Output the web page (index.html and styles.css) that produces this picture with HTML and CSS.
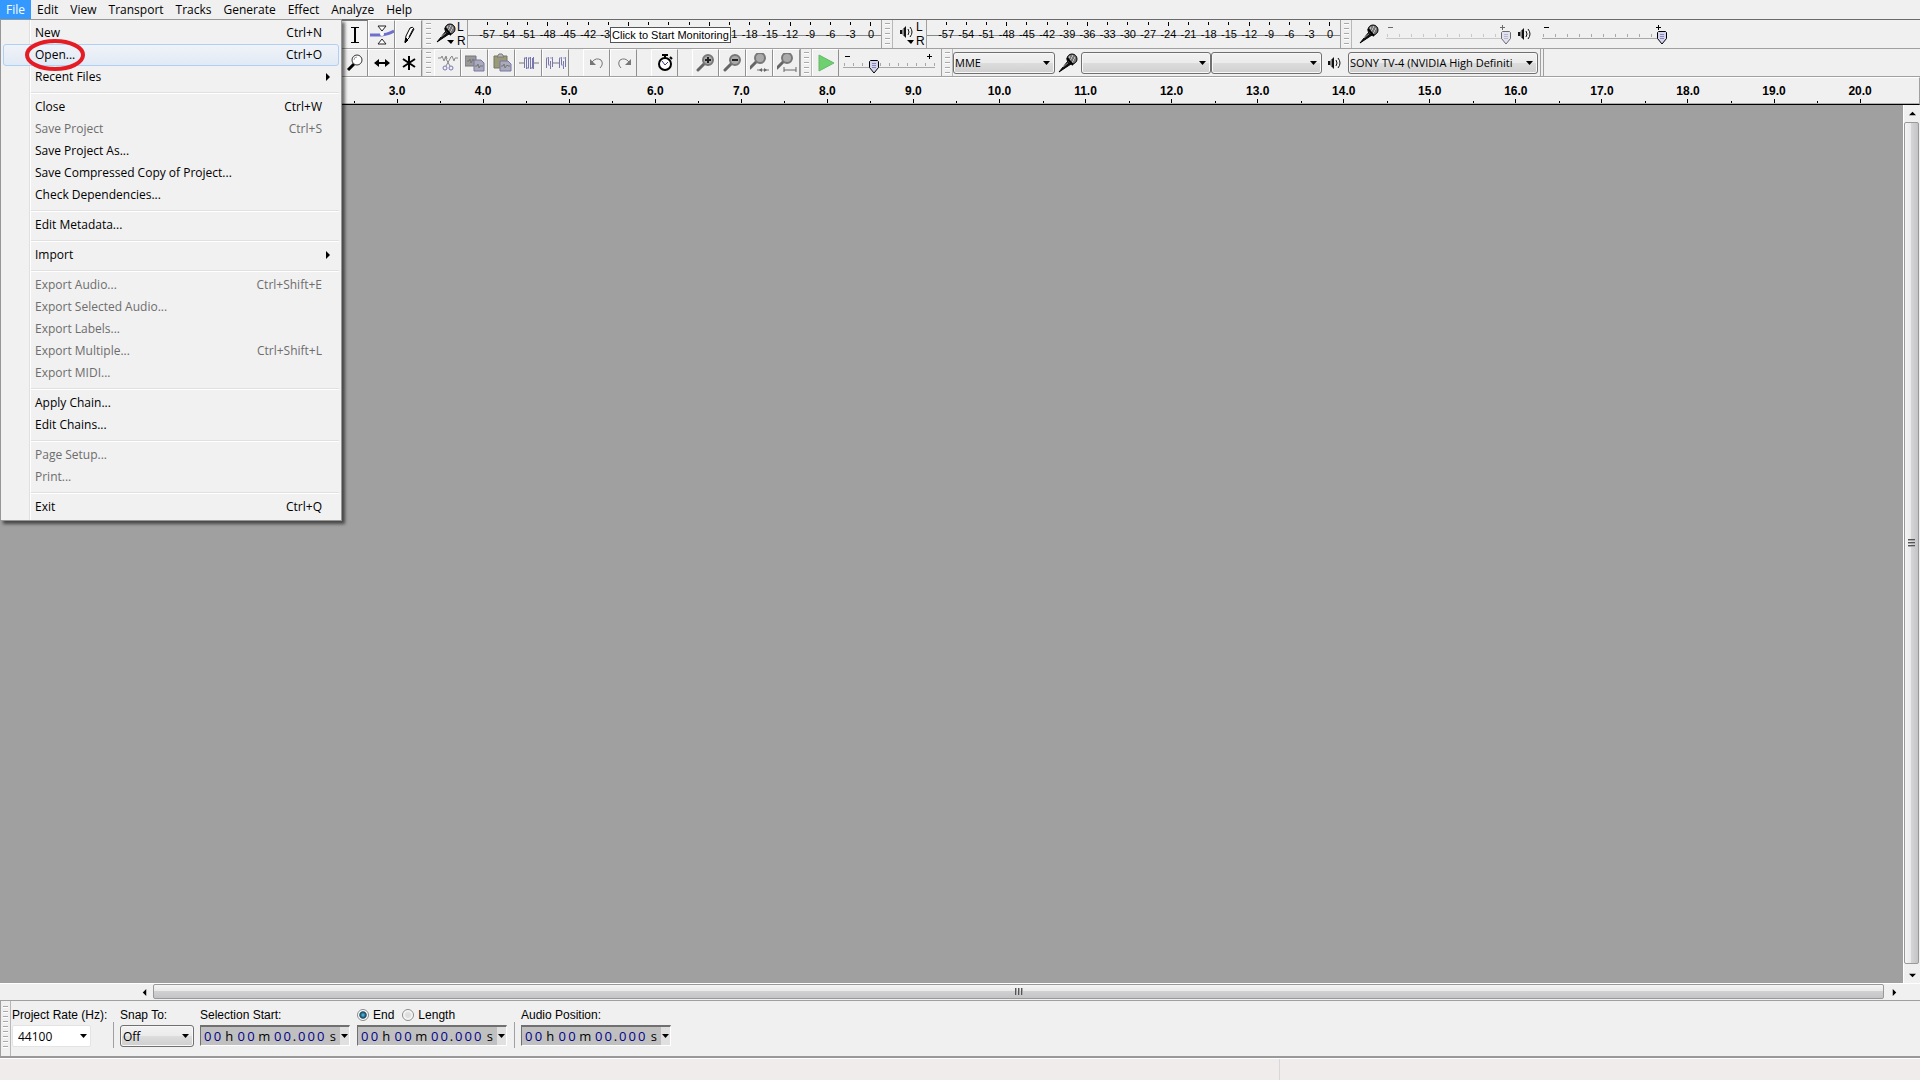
FILE: index.html
```html
<!DOCTYPE html>
<html lang="en">
<head>
    <meta charset="utf-8">
    <title>Audacity</title>
    <link rel="stylesheet" href="styles.css">
</head>
<body>
    <!-- Shared icons -->
    <svg class="defs" aria-hidden="true">
        <symbol id="mic" viewBox="0 0 20 20">
            <path d="M1 19L10 8L13 11Z" fill="#111" stroke="#000"/>
            <path d="M5 14L11 9" stroke="#999"/>
            <circle cx="14" cy="6" r="5" fill="#777" stroke="#000"/>
            <path d="M11 4h1M14 3h1M13 5h1M16 5h1M12 7h1M15 7h1M14 9h1" stroke="#fff"/>
            <path d="M9 5L15 12" stroke="#000" stroke-width="2"/>
        </symbol>
        <symbol id="speaker" viewBox="0 0 14 12">
            <path d="M0 4h2L6 0v12L2 8H0z" fill="#111"/>
            <path d="M3 3v6" stroke="#fff"/>
            <path d="M8 3q2 3 0 6M10 1q4 5 0 10" fill="none" stroke="#111"/>
        </symbol>
        <symbol id="lens" viewBox="0 0 20 20">
            <path d="M2 17L9 10" stroke="#666" stroke-width="3" stroke-linecap="round"/>
            <circle cx="12" cy="7" r="5" fill="#aaa" stroke="#777" stroke-width="2"/>
        </symbol>
    </svg>

    <nav class="menubar">
        <button class="active">File</button>
        <button>Edit</button>
        <button>View</button>
        <button>Transport</button>
        <button>Tracks</button>
        <button>Generate</button>
        <button>Effect</button>
        <button>Analyze</button>
        <button>Help</button>

        <div class="menu">
            <button>New<span>Ctrl+N</span></button>
            <button class="hover">Open...<span>Ctrl+O</span>
                <svg class="ring" viewBox="0 0 62 34"><ellipse cx="31" cy="17" rx="28" ry="14" fill="none" stroke="#e61c24" stroke-width="4"/></svg>
            </button>
            <button class="sub">Recent Files</button>
            <hr>
            <button>Close<span>Ctrl+W</span></button>
            <button disabled>Save Project<span>Ctrl+S</span></button>
            <button>Save Project As...</button>
            <button>Save Compressed Copy of Project...</button>
            <button>Check Dependencies...</button>
            <hr>
            <button>Edit Metadata...</button>
            <hr>
            <button class="sub">Import</button>
            <hr>
            <button disabled>Export Audio...<span>Ctrl+Shift+E</span></button>
            <button disabled>Export Selected Audio...</button>
            <button disabled>Export Labels...</button>
            <button disabled>Export Multiple...<span>Ctrl+Shift+L</span></button>
            <button disabled>Export MIDI...</button>
            <hr>
            <button>Apply Chain...</button>
            <button>Edit Chains...</button>
            <hr>
            <button disabled>Page Setup...</button>
            <button disabled>Print...</button>
            <hr>
            <button>Exit<span>Ctrl+Q</span></button>
        </div>
    </nav>

    <div class="toolbar">
        <button class="tool pressed" aria-label="Selection Tool">
            <svg viewBox="0 0 20 20"><path d="M6 2.5h8M6 17.5h8" stroke="#000"/><path d="M10 2v16" stroke="#000" stroke-width="2"/></svg>
        </button>
        <button class="tool wide" aria-label="Envelope Tool">
            <svg viewBox="0 0 24 22"><path d="M0 11h10q6 0 14-4" fill="none" stroke="#6f70cc" stroke-width="3"/><path d="M8 2h8l-4 5zM8 20h8l-4-5z" fill="#fff" stroke="#222"/><circle cx="12" cy="10" r="2" fill="#fff"/></svg>
        </button>
        <button class="tool" aria-label="Draw Tool">
            <svg viewBox="0 0 20 20"><path d="M6 17l1-6 4-8q3-2 4 1l-5 9z" fill="#fff" stroke="#000"/><path d="M6 18l1-5 2 2zM10 12l4-8" fill="#000" stroke="#000"/></svg>
        </button>
        <div class="grip"></div>
        <div class="meter-group">
            <button class="meter-icon" aria-label="Record Meter">
                <svg viewBox="0 0 22 24"><use href="#mic" x="2" y="1" width="20" height="20"/><path d="M13 18h7l-3 4z"/></svg>
            </button>
            <div class="lr"><span>L</span><span>R</span></div>
            <div class="meter">
                <span>-57</span><span>-54</span><span>-51</span><span>-48</span><span>-45</span><span>-42</span><span>-39</span><span></span><span></span><span></span><span></span><span></span><span>-21</span><span>-18</span><span>-15</span><span>-12</span><span>-9</span><span>-6</span><span>-3</span><span>0</span>
                <div class="tooltip">Click to Start Monitoring</div>
            </div>
        </div>
        <div class="grip boxed"></div>
        <div class="meter-group">
            <button class="meter-icon" aria-label="Playback Meter">
                <svg viewBox="0 0 22 24"><use href="#speaker" x="7" y="4" width="14" height="12"/><path d="M14 18h7l-3 4z"/></svg>
            </button>
            <div class="lr"><span>L</span><span>R</span></div>
            <div class="meter">
                <span>-57</span><span>-54</span><span>-51</span><span>-48</span><span>-45</span><span>-42</span><span>-39</span><span>-36</span><span>-33</span><span>-30</span><span>-27</span><span>-24</span><span>-21</span><span>-18</span><span>-15</span><span>-12</span><span>-9</span><span>-6</span><span>-3</span><span>0</span>
            </div>
        </div>
        <div class="grip boxed"></div>
        <div class="mixer">
            <svg class="mic"><use href="#mic"/></svg>
            <label class="slider off"><input type="range" min="0" max="1" step="0.01" value="1" aria-label="Recording Volume" disabled></label>
            <svg class="speaker"><use href="#speaker"/></svg>
            <label class="slider"><input type="range" min="0" max="1" step="0.01" value="1" aria-label="Playback Volume"></label>
        </div>
    </div>

    <div class="toolbar second">
        <button class="tool" aria-label="Zoom Tool">
            <svg viewBox="0 0 20 20"><path d="M3 17L9 11" stroke="#000" stroke-width="3"/><circle cx="12" cy="7" r="5" fill="#fff" stroke="#333"/><path d="M9 7q0-3 3-3" fill="none" stroke="#999"/></svg>
        </button>
        <button class="tool" aria-label="Time Shift Tool">
            <svg viewBox="0 0 20 20"><path d="M3 10h14" stroke="#000" stroke-width="2"/><path d="M2 10l5-4v8zM18 10l-5-4v8z"/></svg>
        </button>
        <button class="tool" aria-label="Multi-Tool">
            <svg viewBox="0 0 20 20"><path d="M10 3v14M4 6l12 8M16 6L4 14" stroke="#000" stroke-width="2"/></svg>
        </button>
        <div class="grip"></div>
        <div class="tools">
            <button class="tool" aria-label="Cut">
                <svg viewBox="0 0 20 20"><path d="M0 5h3l1-2 2 5 2-5 1 3M12 5l2-2 2 5 1-3h3" fill="none" stroke="#888"/><path d="M7 4l5 9M13 4l-5 9" stroke="#888"/><circle cx="7" cy="15" r="2" fill="none" stroke="#7777b5"/><circle cx="13" cy="15" r="2" fill="none" stroke="#7777b5"/></svg>
            </button>
            <button class="tool" aria-label="Copy">
                <svg viewBox="0 0 20 20"><path d="M0 3h11v10H0z" fill="#999" stroke="#777"/><path d="M9 7h7l3 3v8H9z" fill="#aab" stroke="#7777a5"/><path d="M2 8h2l1-2 1 4 2-4 1 2M10 13h2l1-2 1 4 1-2h3" fill="none" stroke="#777"/></svg>
            </button>
            <button class="tool" aria-label="Paste">
                <svg viewBox="0 0 20 20"><path d="M2 3h13v12H2z" fill="#9a9a78" stroke="#777760"/><path d="M5 4l2-3h3l2 3z" fill="#bbb" stroke="#777"/><path d="M8 8h8l3 3v7H8z" fill="#aab" stroke="#7777a5"/><path d="M9 13h2l1-2 1 4 2-3 1 1h2" fill="none" stroke="#777"/></svg>
            </button>
            <button class="tool" aria-label="Trim">
                <svg viewBox="0 0 20 20"><path d="M0 10h5M15 10h5" stroke="#777"/><path d="M5.500 5v10M7.500 4v12M9.500 5v10M11.500 4v12M13.500 5v10M14.500 4v12" fill="none" stroke="#7777b0"/><path d="M5 5h2M7 15h3M9 5h3M11 15h3" stroke="#7777b0"/></svg>
            </button>
            <button class="tool" aria-label="Silence">
                <svg viewBox="0 0 20 20"><path d="M6 10h8" stroke="#777"/><path d="M.500 5v10M2.500 4v8M4.500 8v8M6.500 4v10M13.500 5v10M15.500 4v8M17.500 8v8M19.500 4v10" stroke="#7777b0"/><path d="M0 5h3M2 12h3M4 5h3M13 5h3M15 12h3M17 5h3" stroke="#9a9ac4"/></svg>
            </button>
        </div>
        <div class="tools">
            <button class="tool" aria-label="Undo">
                <svg viewBox="0 0 20 20"><path d="M5 9q4-5 9-2 3 4-1 8" fill="none" stroke="#777"/><path d="M3 6v6h6z" fill="#777"/></svg>
            </button>
            <button class="tool" aria-label="Redo">
                <svg viewBox="0 0 20 20"><path d="M15 9q-4-5-9-2-3 4 1 8" fill="none" stroke="#777"/><path d="M17 6v6h-6z" fill="#777"/></svg>
            </button>
        </div>
        <div class="tools">
            <button class="tool" aria-label="Sync-Lock Tracks">
                <svg viewBox="0 0 20 20"><path d="M7 2h6M10 1v4M15 4l2 2" stroke="#000" stroke-width="2"/><circle cx="10" cy="11" r="6" fill="#fff" stroke="#000" stroke-width="2"/><path d="M7 8l3 4 3-3" fill="none" stroke="#3838a0"/></svg>
            </button>
        </div>
        <div class="tools">
            <button class="tool" aria-label="Zoom In">
                <svg viewBox="0 0 20 20"><use href="#lens" width="20" height="20"/><path d="M9 7h6M12 4v6" stroke="#222" stroke-width="2"/></svg>
            </button>
            <button class="tool" aria-label="Zoom Out">
                <svg viewBox="0 0 20 20"><use href="#lens" width="20" height="20"/><path d="M9 7h6" stroke="#222" stroke-width="2"/></svg>
            </button>
            <button class="tool" aria-label="Fit Selection">
                <svg viewBox="0 0 20 20"><use href="#lens" x="-2" y="-2" width="20" height="20"/><path d="M7 17h12" stroke="#777"/><path d="M9 17l3-2v4zM17 17l-3-2v4z" fill="#666"/></svg>
            </button>
            <button class="tool" aria-label="Fit Project">
                <svg viewBox="0 0 20 20"><use href="#lens" x="-2" y="-2" width="20" height="20"/><path d="M7 17h12M7 14v5M19 14v5" stroke="#666"/></svg>
            </button>
        </div>
        <div class="grip boxed"></div>
        <button class="tool" aria-label="Play-at-Speed">
            <svg viewBox="0 0 20 20"><path d="M3 2v16l15-8z" fill="#6fd06f" stroke="#68b868"/></svg>
        </button>
        <label class="slider speed"><input type="range" min="0" max="1" step="0.01" value="0.3" aria-label="Playback Speed"></label>
        <div class="grip boxed"></div>
        <div class="devices">
            <select class="host" aria-label="Audio Host"><option>MME</option></select>
            <svg class="mic"><use href="#mic"/></svg>
            <select class="input-device" aria-label="Recording Device"><option></option></select>
            <select class="channels" aria-label="Recording Channels"><option></option></select>
            <svg class="speaker"><use href="#speaker"/></svg>
            <select class="output-device" aria-label="Playback Device"><option>SONY TV-4 (NVIDIA High Definiti</option></select>
        </div>
    </div>

    <div class="ruler">
        <span>3.0</span><span>4.0</span><span>5.0</span><span>6.0</span><span>7.0</span><span>8.0</span><span>9.0</span><span>10.0</span><span>11.0</span><span>12.0</span><span>13.0</span><span>14.0</span><span>15.0</span><span>16.0</span><span>17.0</span><span>18.0</span><span>19.0</span><span>20.0</span>
    </div>

    <main class="workspace">
        <div class="tracks"></div>
        <div class="scroll vertical">
            <button aria-label="Scroll up"><svg viewBox="0 0 8 8"><path d="M0 6h8L4 2z"/></svg></button>
            <div class="thumb"><i></i></div>
            <button aria-label="Scroll down"><svg viewBox="0 0 8 8"><path d="M0 2h8L4 6z"/></svg></button>
        </div>
    </main>
    <div class="scroll horizontal">
        <button aria-label="Scroll left"><svg viewBox="0 0 8 8"><path d="M6 0v8L2 4z"/></svg></button>
        <div class="thumb"><i></i></div>
        <button aria-label="Scroll right"><svg viewBox="0 0 8 8"><path d="M2 0v8l4-4z"/></svg></button>
    </div>

    <footer class="selection-bar">
        <div class="grip boxed"></div>
        <div class="field rate">
            <label for="rate">Project Rate (Hz):</label>
            <div class="combo">
                <input type="text" id="rate" value="44100">
                <button class="drop" aria-label="Choose rate"></button>
            </div>
        </div>
        <div class="field snap">
            <label for="snap">Snap To:</label>
            <select id="snap"><option>Off</option></select>
        </div>
        <div class="field">
            <div class="caption">Selection Start:</div>
            <div class="time"><b>0</b><b>0</b><em>h</em><b>0</b><b>0</b><em class="min">m</em><b>0</b><b>0</b><u>.</u><b>0</b><b>0</b><b>0</b><em>s</em><button class="drop" aria-label="Selection start format"></button></div>
        </div>
        <div class="field">
            <div class="caption">
                <label><input type="radio" name="end" checked>End</label>
                <label><input type="radio" name="end">Length</label>
            </div>
            <div class="time"><b>0</b><b>0</b><em>h</em><b>0</b><b>0</b><em class="min">m</em><b>0</b><b>0</b><u>.</u><b>0</b><b>0</b><b>0</b><em>s</em><button class="drop" aria-label="Selection end format"></button></div>
        </div>
        <div class="field position">
            <div class="caption">Audio Position:</div>
            <div class="time"><b>0</b><b>0</b><em>h</em><b>0</b><b>0</b><em class="min">m</em><b>0</b><b>0</b><u>.</u><b>0</b><b>0</b><b>0</b><em>s</em><button class="drop" aria-label="Audio position format"></button></div>
        </div>
    </footer>
    <div class="status"><div></div><div></div></div>
</body>
</html>
```
FILE: styles.css
```css
* {
    box-sizing: border-box;
}

body {
    margin: 0;
    height: 100vh;
    display: flex;
    flex-direction: column;
    overflow: hidden;
    background: #f0f0f0;
    color: #000;
    font: 12px "Liberation Sans", Arial, sans-serif;
}

button {
    margin: 0;
    padding: 0;
    border: 0;
    background: none;
    color: inherit;
    font: inherit;
}

.defs {
    display: none;
}

/* Menu bar */
.menubar {
    position: relative;
    z-index: 5;
    display: flex;
    flex: none;
    height: 20px;
    border-bottom: 1px solid #6b6b6b;
    font-family: "Open Sans", sans-serif;
}

.menubar > button {
    padding: 0 6px;
    line-height: 17px;
}

.menubar > .active {
    background: #3399ff;
    color: #fff;
}

.menu {
    position: absolute;
    top: 19px;
    left: 0;
    width: 342px;
    padding: 2px;
    border: 1px solid #979797;
    background: linear-gradient(to right, transparent 28px, #e0e0e0 28px, #e0e0e0 29px, #fff 29px, #fff 30px, transparent 30px) #f1f1f1;
    box-shadow: 3px 3px 3px rgba(0, 0, 0, 0.55);
}

.menu button {
    position: relative;
    display: flex;
    justify-content: space-between;
    width: 100%;
    height: 22px;
    padding: 0 16px 0 31px;
    border: 1px solid transparent;
    border-radius: 3px;
    line-height: 20px;
}

.menu button:disabled {
    color: #6d6d6d;
}

.menu .hover {
    border-color: #aecff7;
    background: linear-gradient(rgba(240, 244, 250, 0.8), rgba(221, 232, 246, 0.8));
}

.menu .sub::after {
    content: "";
    align-self: center;
    margin-right: -8px;
    border: 4px solid transparent;
    border-left-color: #000;
    border-right-width: 0;
}

.menu hr {
    height: 2px;
    margin: 4px 0 2px 28px;
    border: 0;
    border-top: 1px solid #e0e0e0;
    border-bottom: 1px solid #fff;
}

.ring {
    position: absolute;
    left: 20px;
    top: -7px;
    width: 62px;
    height: 34px;
}

/* Toolbars */
.toolbar {
    display: flex;
    flex: none;
    height: 29px;
    padding-left: 341px;
    border-bottom: 1px solid #a0a0a0;
}

.toolbar.second {
    height: 28px;
}

.tools {
    display: flex;
    margin-right: 14px;
}

.tools:has(+ .grip) {
    margin-right: 0;
}

.tool {
    display: flex;
    flex: none;
    align-items: center;
    justify-content: center;
    width: 27px;
    border-left: 1px solid #fff;
    border-top: 1px solid #fff;
    border-right: 1px solid #909090;
}

.tool svg {
    width: 20px;
    height: 20px;
}

.tool.wide svg {
    width: 24px;
    height: 22px;
}

.pressed {
    border-top-color: #777;
    background: #f4f4f4;
}

.grip {
    flex: none;
    width: 12px;
    border-left: 1px solid #d0d0d0;
    background: repeating-linear-gradient(#a8a8a8 0 1px, #fff 1px 2px, transparent 2px 5px) center / 5px 22px no-repeat;
}

.grip.boxed {
    border-left: 1px solid #a0a0a0;
    border-right: 1px solid #b8b8b8;
}

.meter-group {
    display: flex;
    flex: none;
}

.meter-icon {
    width: 23px;
}

.meter-icon svg {
    display: block;
    width: 22px;
    height: 24px;
}

.lr {
    display: flex;
    flex-direction: column;
    justify-content: space-around;
    width: 10px;
    line-height: 14px;
}

.meter {
    position: relative;
    display: flex;
    width: 414px;
    padding-left: 9px;
    border-left: 1px solid #a0a0a0;
    background: linear-gradient(#888, #888) 0 15px / 100% 1px no-repeat;
    font-size: 11px;
}

.meter span {
    flex: 1 1 0;
    min-width: 0;
    background: linear-gradient(#000, #000) center 2px / 1px 3px no-repeat;
    line-height: 29px;
    text-align: center;
}

.meter span:nth-of-type(4n) {
    background-size: 1px 4px;
}

.tooltip {
    position: absolute;
    left: 142px;
    top: 7px;
    padding: 0 1px;
    border: 1px solid #555;
    background: #fff;
    line-height: 14px;
    white-space: nowrap;
}

.mixer,
.devices {
    display: flex;
    align-items: center;
}

.mixer {
    padding-left: 4px;
}

.mic {
    width: 20px;
    height: 20px;
    margin: 0 3px;
}

.speaker {
    width: 14px;
    height: 12px;
    margin: 0 6px;
}

/* Sliders */
.slider {
    display: block;
    width: 126px;
    height: 24px;
    margin-left: 4px;
    background:
        linear-gradient(#000, #000) 2px 5px / 5px 1px no-repeat,
        linear-gradient(#000, #000) 114px 5px / 5px 1px no-repeat,
        linear-gradient(#000, #000) 116px 3px / 1px 5px no-repeat,
        repeating-linear-gradient(to right, #a8a8a8 0 1px, transparent 1px 12px) 1px 12px / 120px 3px no-repeat,
        linear-gradient(#a8a8a8, #a8a8a8) 0 16px / 122px 1px no-repeat;
}

.slider.off {
    filter: opacity(0.55);
}

.slider input {
    display: block;
    width: 100%;
    height: 24px;
    margin: 2px 0 0;
    appearance: none;
    background: none;
}

.slider input::-webkit-slider-thumb {
    width: 12px;
    height: 14px;
    margin-top: 4px;
    appearance: none;
    background: url("data:image/svg+xml,%3Csvg xmlns='http://www.w3.org/2000/svg' viewBox='0 0 12 14'%3E%3Cpath d='M2.500.500h7l1 1v6L6 13 1.500 7.500v-6z' fill='%23d4d4ee' stroke='%23000'/%3E%3Cpath d='M4 3.500h4M4 5.500h4M4 7.500h4' stroke='%238888b0'/%3E%3C/svg%3E");
}

.slider.speed {
    width: 94px;
    margin: 2px 4px 0 4px;
    background:
        linear-gradient(#000, #000) 2px 5px / 5px 1px no-repeat,
        linear-gradient(#000, #000) 84px 5px / 5px 1px no-repeat,
        linear-gradient(#000, #000) 86px 3px / 1px 5px no-repeat,
        repeating-linear-gradient(to right, #a8a8a8 0 1px, transparent 1px 9px) 1px 12px / 92px 3px no-repeat,
        linear-gradient(#a8a8a8, #a8a8a8) 0 16px / 92px 1px no-repeat;
}

/* Drop-downs */
select {
    height: 22px;
    padding: 0 16px 0 2px;
    border: 1px solid #707070;
    border-radius: 3px;
    appearance: none;
    background:
        url("data:image/svg+xml,%3Csvg xmlns='http://www.w3.org/2000/svg' viewBox='0 0 7 4'%3E%3Cpath d='M0 0h7L3.500 4z'/%3E%3C/svg%3E") right 4px center / 7px 4px no-repeat,
        linear-gradient(#f2f2f2, #ebebeb 50%, #dddddd 50%, #cfcfcf);
    box-shadow: inset 0 0 0 1px #f8f8f8;
    color: #000;
    font: 12px "Open Sans", sans-serif;
}

.devices select {
    padding-left: 1px;
    font-size: 11px;
}

.host {
    width: 102px;
}

.devices .input-device {
    width: 130px;
}

.channels {
    width: 111px;
}

.output-device {
    width: 190px;
}

.devices {
    padding-right: 2px;
    border-right: 1px solid #a0a0a0;
}

.devices::after {
    content: "";
    align-self: stretch;
    margin-left: 2px;
    border-left: 1px solid #a0a0a0;
}

/* Timeline */
.ruler {
    display: flex;
    flex: none;
    height: 28px;
    padding: 0 16px 0 354px;
    border-top: 1px solid #fff;
    border-right: 1px solid #a0a0a0;
    border-bottom: 1px solid #000;
    box-shadow: inset 0 -1px #b0b0b0;
    font-weight: bold;
}

.ruler span {
    flex: 1;
    background:
        linear-gradient(#000, #000) center 21px / 1px 4px no-repeat,
        linear-gradient(#000, #000) 0 23px / 1px 2px no-repeat;
    line-height: 26px;
    text-align: center;
}

.workspace {
    display: flex;
    flex: 1;
    min-height: 0;
}

.tracks {
    flex: 1;
    background: #a0a0a0;
}

/* Scroll bars */
.scroll {
    display: flex;
    flex: none;
    background: #f0f0f0;
}

.scroll button {
    display: flex;
    flex: none;
    align-items: center;
    justify-content: center;
    width: 16px;
    height: 16px;
}

.scroll svg {
    width: 7px;
    height: 7px;
}

.scroll .thumb {
    display: flex;
    flex: 1;
    align-items: center;
    justify-content: center;
    border: 1px solid #999;
    border-radius: 2px;
}

.vertical {
    flex-direction: column;
    width: 17px;
    border-left: 1px solid #fff;
}

.vertical .thumb {
    margin: 1px 1px 3px 0;
    background: linear-gradient(to right, #f5f5f5, #e8e8e8 50%, #d4d4d6 50%, #c4c4c8);
}

.horizontal {
    height: 17px;
    padding: 0 18px 1px 136px;
    border-top: 1px solid #fff;
}

.horizontal .thumb {
    margin: 0 2px 0 1px;
    background: linear-gradient(#f5f5f5, #e8e8e8 50%, #d0d0d2 50%, #c4c4c6);
}

.thumb i {
    width: 7px;
    height: 8px;
    background: repeating-linear-gradient(#555 0 1px, #aaa 1px 2px, transparent 2px 3px);
}

.horizontal i {
    width: 8px;
    height: 7px;
    background: repeating-linear-gradient(to right, #555 0 1px, #aaa 1px 2px, transparent 2px 3px);
}

/* Selection toolbar */
.selection-bar {
    display: flex;
    flex: none;
    height: 58px;
    border-top: 1px solid #a0a0a0;
    border-bottom: 2px solid #999;
}

.selection-bar .grip {
    width: 11px;
    background-size: 5px 45px;
}

.field {
    display: flex;
    flex-direction: column;
    padding-top: 4px;
    margin-right: 7px;
    line-height: 20px;
}

.caption {
    display: flex;
    gap: 8px;
}

.rate {
    width: 103px;
    margin-right: 0;
    padding-left: 1px;
    background: linear-gradient(#a0a0a0, #a0a0a0) right 21px / 1px 26px no-repeat;
}

.snap {
    margin-right: 6px;
    padding-left: 6px;
}

.snap select {
    width: 74px;
}

.combo {
    display: flex;
    width: 79px;
    height: 22px;
    border: 1px solid #e4e4e4;
    border-radius: 2px;
    background: #fff;
}

.combo input {
    width: 60px;
    padding: 0 5px;
    border: 0;
    background: none;
    font: 12px "Open Sans", sans-serif;
}

.drop {
    flex: none;
    width: 9px;
    background: url("data:image/svg+xml,%3Csvg xmlns='http://www.w3.org/2000/svg' viewBox='0 0 7 4'%3E%3Cpath d='M0 0h7L3.500 4z'/%3E%3C/svg%3E") center / 7px 4px no-repeat;
}

.combo .drop {
    width: 20px;
}

.caption label {
    display: flex;
    align-items: center;
}

.caption input {
    width: 12px;
    height: 12px;
    margin: 0 4px 0 0;
    border: 1px solid #8a8a8a;
    border-radius: 50%;
    appearance: none;
    background: radial-gradient(#ddd 30%, #fff 70%);
}

.caption input:checked {
    background: radial-gradient(#5cc4e8, #14415f 45%, #fff 60%);
}

.time {
    display: flex;
    width: 150px;
    height: 21px;
    padding-left: 2px;
    border: 1px solid #fff;
    border-top: 2px solid #707070;
    border-left: 1px solid #707070;
    background: #c0c0c0;
    font: 13px "Open Sans", sans-serif;
    line-height: 19px;
    text-align: center;
}

.time b {
    width: 10px;
    color: #00008b;
    font-weight: normal;
}

.time em {
    width: 15px;
    font-style: normal;
}

.time .min {
    width: 18px;
}

.time u {
    width: 5px;
    text-decoration: none;
}

.time .drop {
    margin-left: auto;
    background-color: #e0e0e0;
}

.position {
    padding-left: 7px;
    background: linear-gradient(#a0a0a0, #a0a0a0) 0 21px / 1px 26px no-repeat;
}

.status {
    display: flex;
    flex: none;
    height: 22px;
    border-top: 1px solid #fff;
    background: #f0eceb;
}

.status div:first-child {
    flex: 2;
    border-right: 1px solid #d8d8d8;
}

.status div:last-child {
    flex: 1;
}
```
